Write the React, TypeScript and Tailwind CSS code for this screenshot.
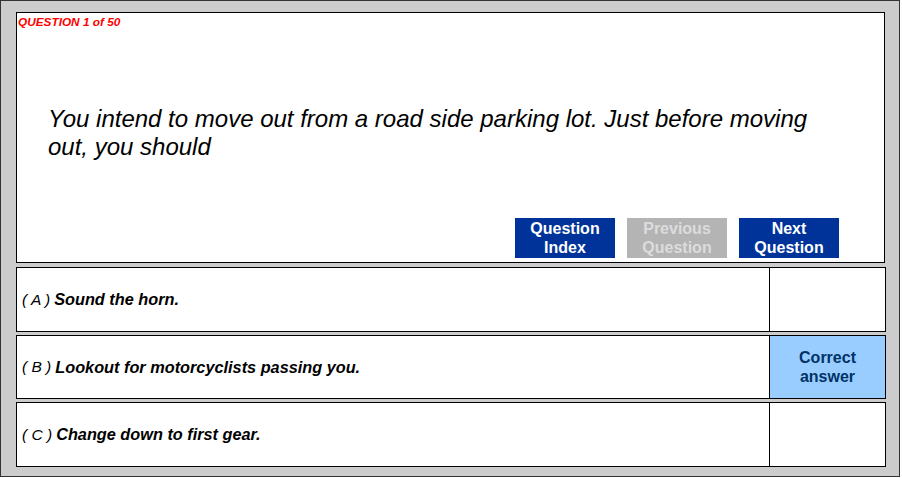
import React from 'react';

const answers = [
    { key: 'A', text: 'Sound the horn.', correct: false },
    { key: 'B', text: 'Lookout for motorcyclists passing you.', correct: true },
    { key: 'C', text: 'Change down to first gear.', correct: false },
];

function NavButton({ label, disabled }: { label: string[]; disabled?: boolean }) {
    return (
        <div
            className={
                'w-[100px] h-[40px] flex flex-col items-center justify-center text-[16px] leading-[19px] font-bold ' +
                (disabled ? 'bg-[#b4b4b4] text-[#dcdcdc]' : 'bg-[#003399] text-white')
            }
        >
            {label.map(l => (
                <span key={l}>{l}</span>
            ))}
        </div>
    );
}

export default function App() {
    return (
        <div
            className="w-[900px] h-[477px] bg-[#cccccc] border border-[#333333] pt-[11px] pl-[15px]"
            style={{ fontFamily: '"Liberation Sans", Arial, sans-serif' }}
        >
            <div className="w-[869px] h-[251px] bg-white border border-black flex flex-col">
                <div className="pl-[1px] pt-[3px] text-[11.8px] leading-[13px] font-bold italic text-[#ff0000]">
                    QUESTION 1 of 50
                </div>
                <p className="mt-[76px] pl-[31px] w-[820px] text-[24px] leading-[28px] italic text-black">
                    You intend to move out from a road side parking lot. Just before moving out, you should
                </p>
                <div className="mt-auto mb-[4px] flex justify-end gap-[12px] pr-[45px]">
                    <NavButton label={['Question', 'Index']} />
                    <NavButton label={['Previous', 'Question']} disabled />
                    <NavButton label={['Next', 'Question']} />
                </div>
            </div>

            <div className="mt-[4px] flex flex-col gap-[3px]">
                {answers.map(a => (
                    <div key={a.key} className="w-[870px] h-[64.5px] bg-white border border-black flex">
                        <div className="flex-1 flex items-center pl-[5px] text-[16.3px] italic text-black">
                            <span className="font-normal text-[15.5px] mr-[4px]">( {a.key} )</span>
                            <span className="font-bold">{a.text}</span>
                        </div>
                        <div
                            className={
                                'w-[116px] border-l border-black flex flex-col items-center justify-center text-[16px] leading-[19px] font-bold text-[#003366] ' +
                                (a.correct ? 'bg-[#99ccff]' : 'bg-white')
                            }
                        >
                            {a.correct && (
                                <>
                                    <span>Correct</span>
                                    <span>answer</span>
                                </>
                            )}
                        </div>
                    </div>
                ))}
            </div>
        </div>
    );
}
